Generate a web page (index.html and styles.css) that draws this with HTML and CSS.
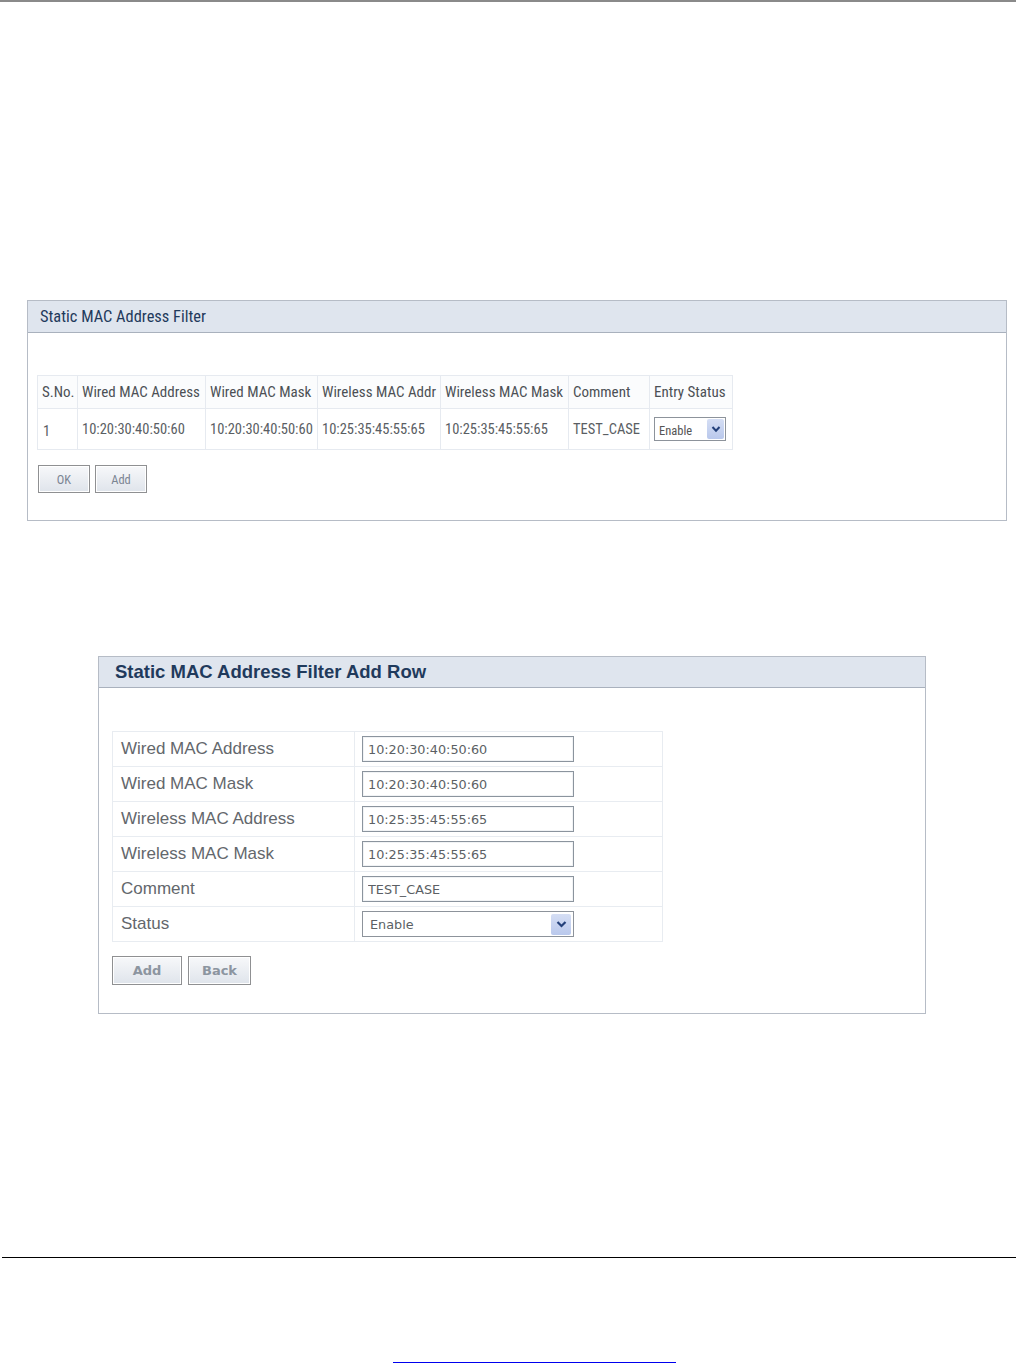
FILE: index.html
```html
<!DOCTYPE html>
<html>
<head>
<meta charset="utf-8">
<title>Static MAC Address Filter</title>
<link rel="stylesheet" href="styles.css">
</head>
<body>
<div class="top-rule"></div>

<section class="panel panel-list">
  <div class="panel-head"><h2 class="title-narrow">Static MAC Address Filter</h2></div>
  <div class="panel-body list-body">
    <table class="list-table">
      <colgroup>
        <col class="c1"><col class="c2"><col class="c3"><col class="c4"><col class="c5"><col class="c6"><col class="c7">
      </colgroup>
      <thead>
        <tr>
          <th>S.No.</th><th>Wired MAC Address</th><th>Wired MAC Mask</th><th>Wireless MAC Addr</th><th>Wireless MAC Mask</th><th>Comment</th><th>Entry Status</th>
        </tr>
      </thead>
      <tbody>
        <tr>
          <td class="sno">1</td><td>10:20:30:40:50:60</td><td>10:20:30:40:50:60</td><td>10:25:35:45:55:65</td><td>10:25:35:45:55:65</td><td>TEST_CASE</td>
          <td>
            <div class="fake-select small-select">
              <span class="sel-text">Enable</span>
              <span class="sel-arrow"><svg width="10" height="8" viewBox="0 0 10 8"><path d="M1.5 2 L5 5.8 L8.5 2" fill="none" stroke="#23407a" stroke-width="2"/></svg></span>
            </div>
          </td>
        </tr>
      </tbody>
    </table>
    <div class="btn-row">
      <button class="btn btn-small">OK</button>
      <button class="btn btn-small">Add</button>
    </div>
  </div>
</section>

<section class="panel panel-add">
  <div class="panel-head"><h2 class="title-bold">Static MAC Address Filter Add Row</h2></div>
  <div class="panel-body add-body">
    <table class="form-table">
      <tr><td class="lbl">Wired MAC Address</td><td class="val"><input class="txt" type="text" value="10:20:30:40:50:60"></td></tr>
      <tr><td class="lbl">Wired MAC Mask</td><td class="val"><input class="txt" type="text" value="10:20:30:40:50:60"></td></tr>
      <tr><td class="lbl">Wireless MAC Address</td><td class="val"><input class="txt" type="text" value="10:25:35:45:55:65"></td></tr>
      <tr><td class="lbl">Wireless MAC Mask</td><td class="val"><input class="txt" type="text" value="10:25:35:45:55:65"></td></tr>
      <tr><td class="lbl">Comment</td><td class="val"><input class="txt" type="text" value="TEST_CASE"></td></tr>
      <tr><td class="lbl">Status</td><td class="val">
        <div class="fake-select big-select">
          <span class="sel-text">Enable</span>
          <span class="sel-arrow"><svg width="11" height="8" viewBox="0 0 11 8"><path d="M1.5 2 L5.5 6 L9.5 2" fill="none" stroke="#23407a" stroke-width="2.2"/></svg></span>
        </div>
      </td></tr>
    </table>
    <div class="btn-row btn-row-add">
      <button class="btn btn-big btn-add">Add</button>
      <button class="btn btn-big btn-back">Back</button>
    </div>
  </div>
</section>

<div class="bottom-rule"></div>
<div class="footer-link-wrap"><a class="footer-link" href="#"></a></div>
</body>
</html>
```

FILE: styles.css
```css
html, body {
  margin: 0;
  padding: 0;
  background: #ffffff;
}
body {
  width: 1016px;
  height: 1363px;
  overflow: hidden;
  font-family: "Liberation Sans", Arial, sans-serif;
}
.top-rule {
  height: 2px;
  background: #8a8a8a;
}

.panel {
  border: 1px solid #b6bcc6;
  box-sizing: border-box;
  background: #fff;
}
.panel-head {
  background: #dfe5ee;
  border-bottom: 1px solid #a9b1bd;
  box-sizing: border-box;
  display: flex;
  align-items: center;
}
.panel-head h2 {
  margin: 0;
  color: #1f3a5c;
}

/* Panel 1 */
.panel-list {
  margin: 298px 0 0 27px;
  width: 980px;
  height: 221px;
}
.panel-list .panel-head {
  height: 32px;
  padding-left: 12px;
}
.title-narrow {
  font-family: "Roboto Condensed", "Liberation Sans", sans-serif;
  font-weight: normal;
  font-size: 16.4px;
}
.list-body {
  padding: 42px 0 0 9px;
}
.list-table {
  border-collapse: collapse;
  table-layout: fixed;
  width: 695px;
  font-family: "Roboto Condensed", "Liberation Sans", sans-serif;
  color: #555a60;
}
.list-table .c1 { width: 40px; }
.list-table .c2 { width: 128px; }
.list-table .c3 { width: 112px; }
.list-table .c4 { width: 123px; }
.list-table .c5 { width: 128px; }
.list-table .c6 { width: 81px; }
.list-table .c7 { width: 83px; }
.list-table th, .list-table td {
  border: 1px solid #e6eaf0;
  padding: 0 0 0 4px;
  text-align: left;
  white-space: nowrap;
  overflow: hidden;
}
.list-table th {
  height: 32px;
  font-size: 15px;
  font-weight: normal;
  color: #4c5055;
  background: #fbfcfd;
}
.list-table td {
  height: 40px;
  font-size: 14.5px;
  color: #5a5e63;
}
.list-table td.sno {
  height: 36px;
  padding: 4px 0 0 5px;
}

.fake-select {
  display: flex;
  align-items: center;
  justify-content: space-between;
  box-sizing: border-box;
  border: 1px solid #8d939b;
  background: #fff;
}
.small-select {
  width: 72px;
  height: 24px;
  padding: 1px 1px 1px 4px;
}
.small-select .sel-text {
  font-family: "Roboto Condensed", "Liberation Sans", sans-serif;
  font-size: 12.5px;
  color: #555;
  padding-top: 2px;
}
.sel-arrow {
  display: flex;
  align-items: center;
  justify-content: center;
  background: linear-gradient(#d5def4, #b9c8ec);
  border-radius: 2px;
}
.small-select .sel-arrow {
  width: 17px;
  height: 20px;
}

.btn-row {
  display: flex;
  gap: 5px;
  margin-top: 15px;
}
.btn {
  box-sizing: border-box;
  border: 1px solid #8f9092;
  box-shadow: inset 0 0 0 1px #ffffff;
  background: linear-gradient(#f7f8fa, #dfe4eb);
  color: #7b8593;
  padding: 0;
  margin: 0;
  cursor: pointer;
}
.btn-small {
  width: 52px;
  height: 28px;
  font-family: "Roboto Condensed", "Liberation Sans", sans-serif;
  font-size: 12.5px;
  padding-top: 1px;
}
.panel-list .btn-row {
  margin-left: 1px;
}

/* Panel 2 */
.panel-add {
  margin: 135px 0 0 98px;
  width: 828px;
  height: 358px;
}
.panel-add .panel-head {
  height: 31px;
  padding-left: 16px;
}
.title-bold {
  font-family: "Liberation Sans", Arial, sans-serif;
  font-weight: bold;
  font-size: 18.5px;
  color: #2a4a70;
}
.add-body {
  padding: 43px 0 0 13px;
}
.form-table {
  border-collapse: collapse;
  width: 551px;
  table-layout: fixed;
}
.form-table td {
  border: 1px solid #e8ecf1;
  height: 34px;
  padding: 0;
}
.form-table .lbl {
  width: 242px;
  padding-left: 8px;
  box-sizing: border-box;
  font-size: 17px;
  color: #63676c;
}
.form-table .val {
  padding-left: 7px;
}
.txt {
  display: block;
  box-sizing: border-box;
  width: 212px;
  height: 26px;
  margin: 0;
  border: 1px solid #8b949e;
  box-shadow: inset 0 0 0 1px #f1f3f5;
  padding: 0 0 0 5px;
  font-family: "DejaVu Sans", Verdana, sans-serif;
  font-size: 12.8px;
  color: #5b5f64;
  background: #fff;
  outline: none;
}
.big-select {
  width: 212px;
  height: 26px;
  padding: 1px 2px 1px 7px;
}
.big-select .sel-text {
  font-family: "DejaVu Sans", Verdana, sans-serif;
  font-size: 12.8px;
  color: #5b5f64;
}
.big-select .sel-arrow {
  width: 20px;
  height: 21px;
}

.btn-row-add {
  gap: 6px;
  margin-top: 14px;
}
.btn-big {
  height: 29px;
  font-family: "DejaVu Sans", Verdana, sans-serif;
  font-weight: bold;
  font-size: 13px;
  color: #8c95a0;
}
.btn-add { width: 70px; }
.btn-back { width: 63px; }

/* footer */
.bottom-rule {
  margin: 243px 0 0 2px;
  height: 1px;
  background: #000;
}
.footer-link-wrap {
  margin: 104px 0 0 393px;
  width: 283px;
}
.footer-link {
  display: block;
  height: 0;
  border-bottom: 1px solid #0000ee;
}
```
